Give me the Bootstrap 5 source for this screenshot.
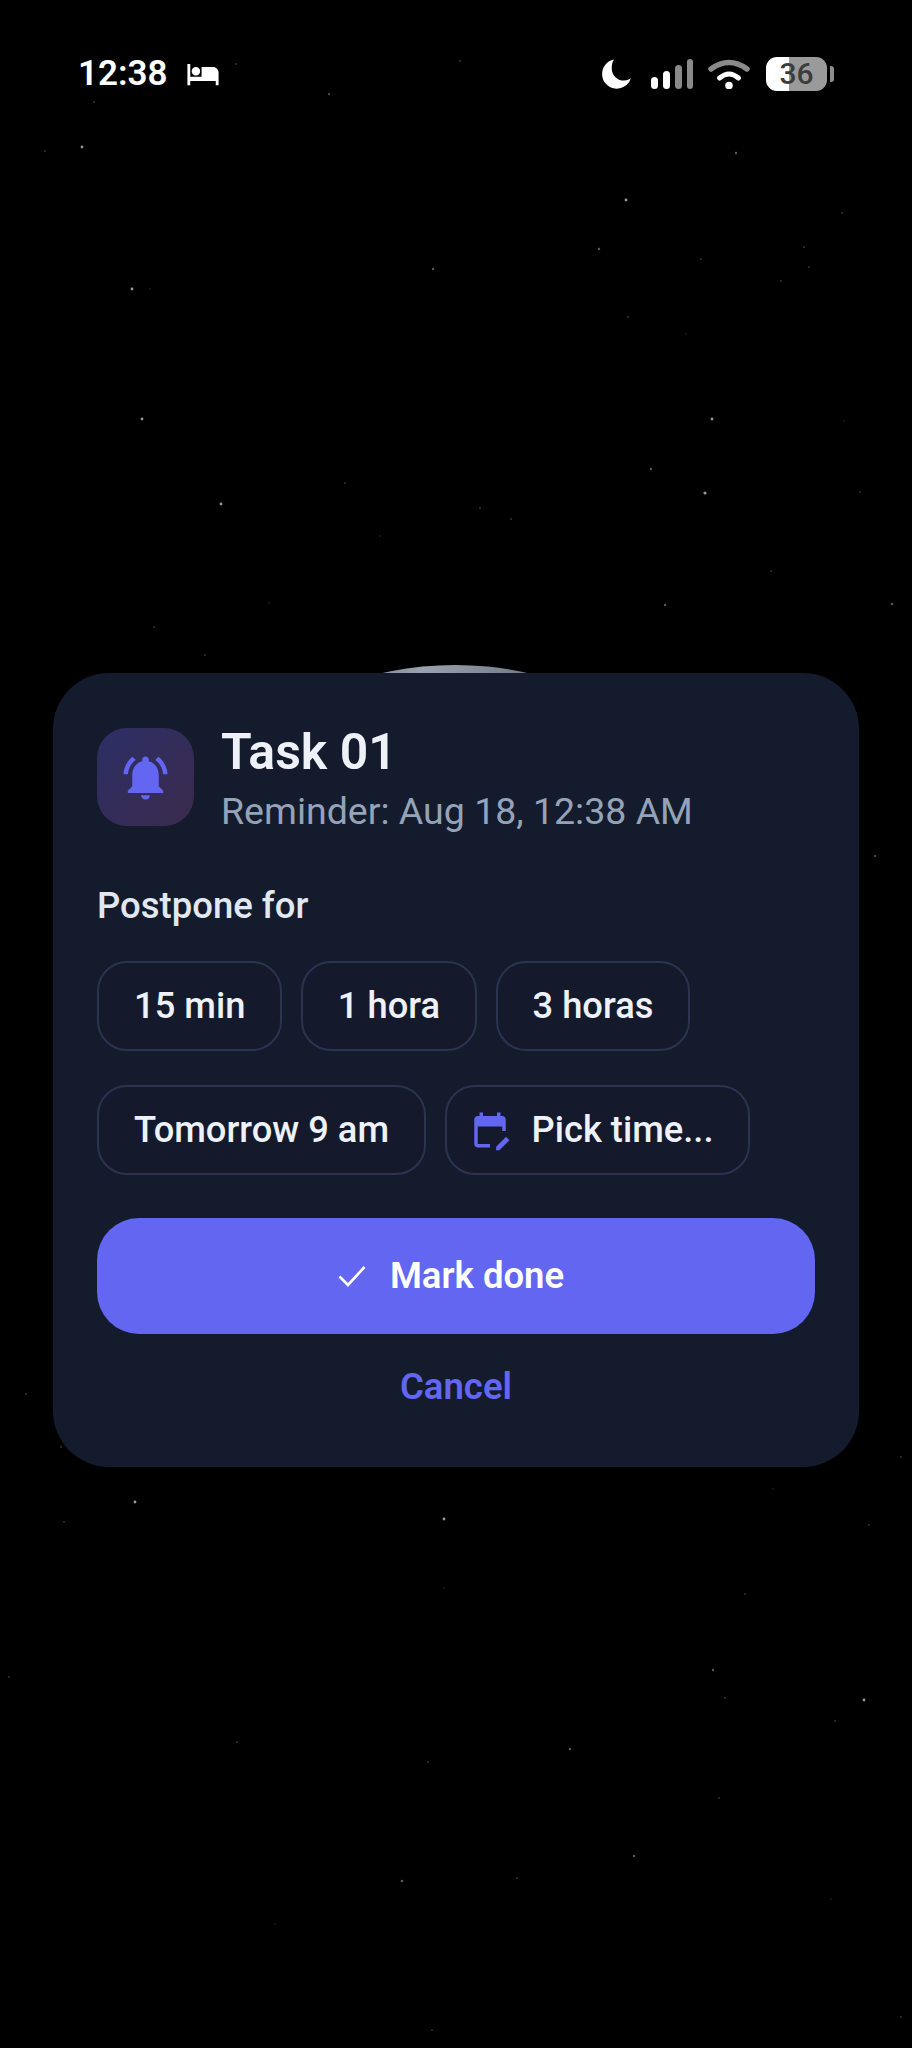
<!DOCTYPE html>
<html lang="en">
<head>
  <meta charset="UTF-8" />
  <meta name="viewport" content="width=device-width, initial-scale=1" />
  <title>Task reminder</title>
  <link href="https://cdn.jsdelivr.net/npm/bootstrap@5.3.2/dist/css/bootstrap.min.css" rel="stylesheet">
  <style>
    html, body { background: #000; }
    body { font-family: Roboto, "Liberation Sans", sans-serif; }
    .lock-screen { width: 912px; height: 2048px; position: relative; overflow: hidden; }
    .sky { position: absolute; top: 0; left: 0; }
    .lock-inner { position: relative; height: 100%; }

    .status-row { height: 34px; margin-top: 57px; padding: 0 78px; color: #fff; }
    .status-time { font-size: 35px; font-weight: 600; line-height: 34px; }
    .status-left { gap: 18px; }
    .status-right { gap: 15px; }
    .batt-body { width: 61px; height: 34px; border-radius: 11px; margin-left: 1px;
      background: linear-gradient(90deg, #fff 0 38%, #9a9a9a 38% 100%);
      color: #3c3c3c; font-size: 30px; font-weight: 500; line-height: 34px; text-align: center; }
    .batt-nub { width: 4px; height: 16px; border-radius: 0 3px 3px 0; background: #8d8d8d; margin-left: 3px; }

    .task-sheet { width: 806px; height: 794px; margin: 582px 0 0 53px; padding: 55px 44px 0;
      background: #141b2d; border: 0; border-radius: 56px; color: #eef2f8; }
    .task-head { gap: 27px; }
    .bell-box { width: 97px; height: 98px; border-radius: 30px; flex: none;
      background: linear-gradient(135deg, #2c2f66, #3a2a4c); }
    .task-title { font-size: 50px; font-weight: 600; line-height: 44px; margin: 0; padding-top: 2px; color: #eef2f8; }
    .task-sub { font-size: 37.5px; line-height: 42px; margin-top: 16px; color: #94a3b8; }
    .postpone-label { font-size: 36.5px; font-weight: 500; line-height: 40px; margin-top: 54px; color: #e2e8f0; }
    .chips { gap: 34px 18.5px; margin-top: 35px; }
    .chip-btn { height: 90px; padding: 0 35px; border: 2px solid #2b3350; border-radius: 30px;
      background: #141a2c; color: #eef2f8; font-size: 36.3px; font-weight: 500; line-height: 1; }
    .chip-btn.with-icon { padding-left: 22px; gap: 21px; padding-right: 34px; }
    .done-btn { width: 718px; height: 116px; margin-top: 43px; padding-right: 22px; border: 0; border-radius: 42px;
      background: #6366f1; color: #fff; font-size: 36.5px; font-weight: 600; gap: 24px; }
    .cancel-btn { width: 718px; margin-top: 28px; padding: 0; border: 0; line-height: 50px;
      color: #6366f1; font-size: 36.5px; font-weight: 600; }
    .home-bar { position: absolute; left: 336px; top: 2017px; width: 239px; height: 9px; border-radius: 5px; background: #f0f0f0; }
  </style>
</head>
<body>
  <div class="lock-screen">
    <svg class="sky" width="912" height="2048" viewBox="0 0 912 2048">
      <defs>
        <linearGradient id="moonFill" x1="0" x2="1" y1="0" y2="0">
          <stop offset="0.1" stop-color="#2c343c"/>
          <stop offset="0.45" stop-color="#98a3ae"/>
          <stop offset="0.9" stop-color="#2c343c"/>
        </linearGradient>
      </defs>
      <ellipse cx="455" cy="993" rx="330" ry="328" fill="url(#moonFill)"/>
      <g fill="#fff" opacity=".6">
        <circle cx="82" cy="147" r="1.400"/><circle cx="626" cy="200" r="1.400"/><circle cx="132" cy="289" r="1.400"/>
        <circle cx="142" cy="419" r="1.400"/><circle cx="712" cy="419" r="1.400"/><circle cx="705" cy="493" r="1.600"/>
        <circle cx="221" cy="504" r="1.400"/><circle cx="135" cy="1502" r="1.400"/><circle cx="444" cy="1519" r="1.400"/>
        <circle cx="864" cy="1700" r="1.400"/>
      </g>
      <g fill="#fff" opacity=".35">
        <circle cx="736" cy="153" r="1.200"/><circle cx="599" cy="249" r="1.200"/><circle cx="433" cy="269" r="1.200"/>
        <circle cx="651" cy="469" r="1.200"/><circle cx="665" cy="605" r="1.200"/><circle cx="892" cy="604" r="1.200"/>
        <circle cx="713" cy="1670" r="1.200"/><circle cx="570" cy="1749" r="1.200"/><circle cx="634" cy="1856" r="1.200"/>
        <circle cx="402" cy="1881" r="1.300"/><circle cx="329" cy="94" r="1.100"/><circle cx="875" cy="856" r="1.100"/>
      </g>
      <g fill="#fff" opacity=".2">
        <circle cx="45" cy="151" r="1"/><circle cx="94" cy="102" r="1"/><circle cx="842" cy="213" r="1"/>
        <circle cx="804" cy="247" r="1"/><circle cx="701" cy="259" r="1"/><circle cx="809" cy="267" r="1"/>
        <circle cx="781" cy="281" r="1"/><circle cx="628" cy="317" r="1"/><circle cx="345" cy="483" r="1"/>
        <circle cx="860" cy="492" r="1"/><circle cx="480" cy="508" r="1"/><circle cx="511" cy="519" r="1"/>
        <circle cx="771" cy="571" r="1"/><circle cx="154" cy="627" r="1"/><circle cx="205" cy="655" r="1"/>
        <circle cx="236" cy="64" r="1"/><circle cx="460" cy="61" r="1"/><circle cx="64" cy="1522" r="1"/>
        <circle cx="869" cy="1525" r="1"/><circle cx="745" cy="1594" r="1"/><circle cx="9" cy="1677" r="1"/>
        <circle cx="725" cy="1698" r="1"/><circle cx="835" cy="1721" r="1"/><circle cx="237" cy="1742" r="1"/>
        <circle cx="428" cy="1762" r="1"/><circle cx="719" cy="1798" r="1"/><circle cx="517" cy="1878" r="1"/>
        <circle cx="901" cy="2017" r="1"/><circle cx="432" cy="2030" r="1"/><circle cx="26" cy="1394" r="1"/>
        <circle cx="901" cy="1457" r="1"/><circle cx="61" cy="1447" r="1"/>
      </g>
      <g fill="#fff" opacity=".1">
        <circle cx="150" cy="289" r="1"/><circle cx="686" cy="334" r="1"/><circle cx="844" cy="421" r="1"/>
        <circle cx="380" cy="536" r="1"/><circle cx="269" cy="603" r="1"/><circle cx="773" cy="1489" r="1"/>
        <circle cx="444" cy="1588" r="1"/><circle cx="831" cy="1899" r="1"/><circle cx="275" cy="1924" r="1"/>
      </g>
    </svg>

    <div class="lock-inner">
      <div class="status-row d-flex justify-content-between align-items-center pt-0">
        <div class="status-left d-flex align-items-center">
          <span class="status-time">12:38</span>
          <svg width="34" height="34" viewBox="0 0 24 24" fill="#fff"><path d="M7 13c1.660 0 3-1.340 3-3S8.660 7 7 7s-3 1.340-3 3 1.340 3 3 3zm12-6h-8v7H3V5H1v15h2v-3h18v3h2v-9c0-2.210-1.790-4-4-4z"/></svg>
        </div>
        <div class="status-right d-flex align-items-center">
          <svg width="32" height="32" viewBox="0 0 24 24" fill="#fff" class="me-1"><path d="M10.500 1.200a11 11 0 1 0 12.600 14c-1 .9-3 1.700-5 1.700-5.400 0-9.300-4-9.300-9.300 0-2.400.6-4.800 1.700-6.400z"/></svg>
          <svg width="42" height="30" viewBox="0 0 42 30">
            <rect x="0" y="18" width="7" height="12" rx="3.500" fill="#fff"/>
            <rect x="12" y="12" width="7" height="18" rx="3.500" fill="#fff"/>
            <rect x="24" y="6" width="7" height="24" rx="3.500" fill="#8a8a8a"/>
            <rect x="36" y="0" width="6" height="30" rx="3" fill="#8a8a8a"/>
          </svg>
          <svg width="42" height="30" viewBox="0 0 42 30" fill="none" stroke-linecap="round">
            <path d="M3 10 Q21 -3 39 10" stroke="#8a8a8a" stroke-width="5.500"/>
            <path d="M11.500 19 Q21 11 30.500 19" stroke="#fff" stroke-width="5"/>
            <circle cx="21" cy="26.500" r="3.800" fill="#fff"/>
          </svg>
          <div class="d-flex align-items-center">
            <div class="batt-body">36</div>
            <div class="batt-nub"></div>
          </div>
        </div>
      </div>

      <div class="task-sheet card shadow-none">
        <div class="task-head d-flex">
          <div class="bell-box d-flex align-items-center justify-content-center">
            <svg width="53" height="53" viewBox="0 0 24 24" fill="#6366f1"><path d="M7.580 4.080 6.150 2.650C3.750 4.480 2.170 7.300 2.030 10.500h2c.15-2.650 1.510-4.970 3.550-6.420zm12.390 6.420h2c-.15-3.200-1.730-6.020-4.120-7.850l-1.420 1.430c2.020 1.450 3.390 3.770 3.540 6.420zM18 11c0-3.070-1.640-5.640-4.500-6.320V4c0-.83-.67-1.500-1.500-1.500s-1.500.67-1.500 1.500v.68C7.630 5.360 6 7.920 6 11v5l-2 2v1h16v-1l-2-2v-5zm-6 11c.14 0 .27-.01.4-.04.65-.14 1.180-.58 1.440-1.180.1-.24.15-.5.15-.78h-4c.01 1.100.9 2 2.010 2z"/></svg>
          </div>
          <div>
            <h1 class="task-title">Task 01</h1>
            <div class="task-sub">Reminder: Aug 18, 12:38 AM</div>
          </div>
        </div>

        <div class="postpone-label">Postpone for</div>

        <div class="chips d-flex flex-wrap">
          <button type="button" class="btn chip-btn">15 min</button>
          <button type="button" class="btn chip-btn">1 hora</button>
          <button type="button" class="btn chip-btn">3 horas</button>
          <button type="button" class="btn chip-btn">Tomorrow 9 am</button>
          <button type="button" class="btn chip-btn with-icon d-flex align-items-center">
            <svg width="42" height="42" viewBox="0 0 24 24" fill="#6366f1"><path d="M5 10h14v2.500h2V6c0-1.100-.9-2-2-2h-1V2h-2v2H8V2H6v2H5c-1.100 0-2 .9-2 2v14c0 1.100.9 2 2 2h7v-2H5V10z"/><path d="M15.500 23.500v-1.900l5.700-5.700 1.900 1.900-5.700 5.700z"/></svg>
            <span>Pick time...</span>
          </button>
        </div>

        <button type="button" class="btn done-btn d-flex align-items-center justify-content-center">
          <svg width="28" height="22" viewBox="0 0 28 22" fill="none" stroke="#fff" stroke-width="2.600"><path d="M1.500 11.500 10 20 26.500 2"/></svg>
          <span>Mark done</span>
        </button>
        <button type="button" class="btn cancel-btn">Cancel</button>
      </div>

      <div class="home-bar"></div>
    </div>
  </div>

  <script src="https://cdn.jsdelivr.net/npm/bootstrap@5.3.2/dist/js/bootstrap.bundle.min.js"></script>
</body>
</html>
